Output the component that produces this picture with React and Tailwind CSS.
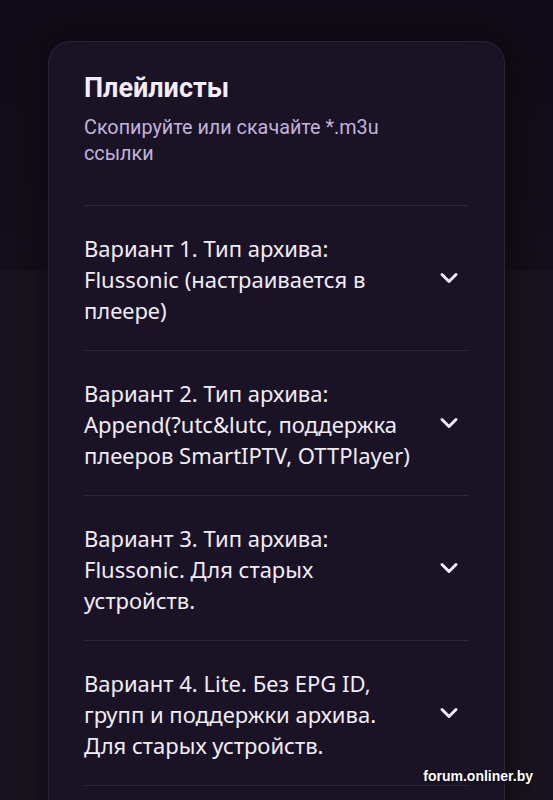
const items = [
  ["Вариант 1. Тип архива:", "Flussonic (настраивается в", "плеере)"],
  ["Вариант 2. Тип архива:", "Append(?utc&lutc, поддержка", "плееров SmartIPTV, OTTPlayer)"],
  ["Вариант 3. Тип архива:", "Flussonic. Для старых", "устройств."],
  ["Вариант 4. Lite. Без EPG ID,", "групп и поддержки архива.", "Для старых устройств."],
];

const Chevron = () => (
  <svg width="20" height="12" viewBox="0 0 20 12" fill="none" stroke="currentColor" strokeWidth="3" strokeLinecap="round" strokeLinejoin="round">
    <path d="M3 2.5l7 7 7-7" />
  </svg>
);

export default function App() {
  return (
    <div className="relative h-[800px] overflow-hidden bg-[linear-gradient(to_bottom,#100c17_0px,#130f1b_270px,#19141f_271px,#19141f_800px)] font-['Noto_Sans',sans-serif]">
      <div className="mx-[48px] mt-[41px] h-[820px] rounded-[22px] border border-[#2c2339] bg-[#1a1326] px-[35px] pt-[31px] shadow-[0_0_40px_rgba(0,0,0,0.5)]">
        <h2 className="text-[27px] leading-[30px] font-bold text-[#f3ecfb] font-['Roboto',sans-serif]">Плейлисты</h2>
        <p className="mt-[12px] text-[19.8px] leading-[26px] text-[#c2b3da] font-['Roboto',sans-serif]">
          Скопируйте или скачайте *.m3u
          <br />
          ссылки
        </p>

        <div className="mt-[38px] border-b border-[#2d2539]">
          {items.map((lines) => (
            <div key={lines[0]} className="flex items-center justify-between border-t border-[#2d2539] pt-[27px] pb-[24px]">
              <div className="text-[22px] leading-[31px] text-[#f1ecf6]">
                {lines.map((l, i) => (
                  <div key={i} className="h-[31px] whitespace-nowrap">
                    {l}
                  </div>
                ))}
              </div>
              <span className="mr-[10px] mb-[4px] text-[#f1ecf6]">
                <Chevron />
              </span>
            </div>
          ))}
        </div>
      </div>

      <div className="absolute right-[20px] bottom-[13px] text-[14px] font-bold text-white font-['Liberation_Sans',sans-serif] [text-shadow:0_0_3px_rgba(0,0,0,0.9)]">
        forum.onliner.by
      </div>
    </div>
  );
}
